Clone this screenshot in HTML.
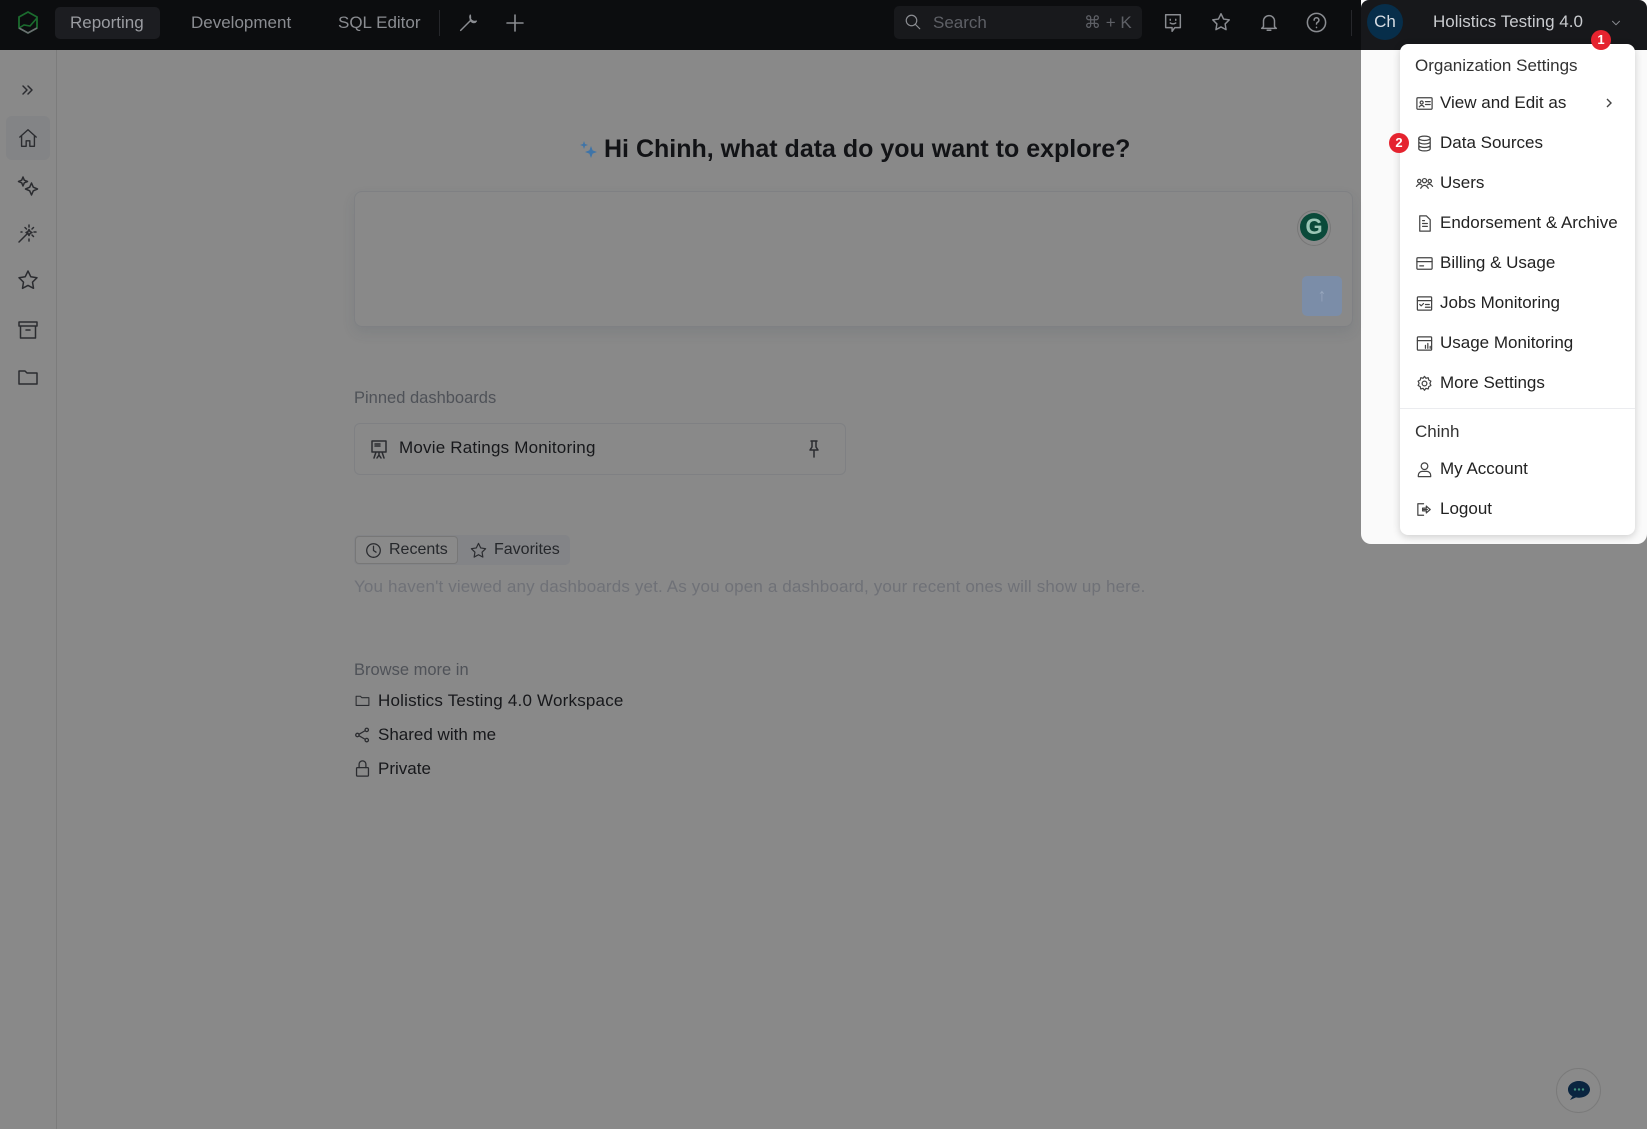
<!DOCTYPE html>
<html><head><meta charset="utf-8"><style>
*{box-sizing:border-box;margin:0;padding:0}
body{width:1647px;height:1129px;overflow:hidden;background:#898989;font-family:"Liberation Sans",sans-serif;position:relative;color:#141518}
.abs{position:absolute}
.top{left:0;top:0;width:1647px;height:50px;background:#0c0d0f}
.nav{color:#8a8c91;font-size:17px;top:13px}
.sb{left:0;top:50px;width:57px;height:1079px;border-right:1px solid #7c7c7c}
.ic{stroke:#2b2c30;fill:none;stroke-width:1.5;stroke-linecap:round;stroke-linejoin:round}
.ti{stroke:#8a8c91;fill:none;stroke-width:1.6;stroke-linecap:round;stroke-linejoin:round}
.mi{position:absolute;left:1415px;font-size:17px;color:#222;display:flex;align-items:center;height:24px}
.mi svg{width:19px;height:19px;margin-right:6px;flex:none}
.mi svg *{stroke:#444;fill:none;stroke-width:1.3;stroke-linecap:round;stroke-linejoin:round}
.badge{width:20px;height:20px;border-radius:50%;background:#e5232f;color:#fff;font-size:13px;font-weight:bold;text-align:center;line-height:20px}
</style></head><body>
<div class="abs top"></div>
<svg class="abs" style="left:16px;top:10px" width="24" height="26" viewBox="0 0 24 26"><path d="M12 2 L21 7 L21 18 L12 23 L3 18 L3 7 Z" fill="none" stroke="#1b6b2e" stroke-width="1.8"/><path d="M3 18 L8 15 L14 16 L21 8" fill="none" stroke="#1b6b2e" stroke-width="1.6"/><path d="M3 18 L12 23 L21 18" fill="none" stroke="#6c6e72" stroke-width="1.6"/></svg>
<div class="abs" style="left:55px;top:7px;width:105px;height:32px;background:#1c1d21;border-radius:5px"></div>
<div class="abs nav" style="left:70px;color:#9a9ca1">Reporting</div>
<div class="abs nav" style="left:191px">Development</div>
<div class="abs nav" style="left:338px">SQL Editor</div>
<div class="abs" style="left:439px;top:10px;width:1px;height:26px;background:#26272b"></div>
<svg class="abs" style="left:457px;top:12px" width="22" height="22" viewBox="0 0 24 24"><path class="ti" d="M14.7 6.3a4 4 0 0 0 5 5L21 10a5 5 0 0 1-6.5-6.5zM14.5 9.5 4 20" stroke-width="2.4"/></svg>
<svg class="abs" style="left:503px;top:11px" width="24" height="24" viewBox="0 0 24 24"><path class="ti" d="M12 4v16M4 12h16" stroke-width="2"/></svg>
<div class="abs" style="left:894px;top:6px;width:248px;height:33px;background:#18191c;border-radius:5px"></div>
<svg class="abs" style="left:904px;top:13px" width="18" height="18" viewBox="0 0 24 24"><circle class="ti" cx="10" cy="10" r="7"/><path class="ti" d="M15 15l6 6"/></svg>
<div class="abs nav" style="left:933px;color:#5e6066">Search</div>
<div class="abs nav" style="left:1084px;color:#5e6066">⌘ + K</div>
<svg class="abs" style="left:1162px;top:11px" width="22" height="24" viewBox="0 0 24 24"><path class="ti" d="M4 3h16v14h-6l-3 4v-4H4z"/><path class="ti" d="M9 8v1M15 8v1M9 12q3 2 6 0"/></svg>
<svg class="abs" style="left:1210px;top:11px" width="22" height="22" viewBox="0 0 24 24"><path class="ti" d="M12 3l2.8 5.8 6.2.9-4.5 4.4 1 6.2L12 17.4 6.5 20.3l1-6.2L3 9.7l6.2-.9z"/></svg>
<svg class="abs" style="left:1258px;top:11px" width="22" height="22" viewBox="0 0 24 24"><path class="ti" d="M6 17V11a6 6 0 0 1 12 0v6l2 2H4zM10 21h4"/></svg>
<svg class="abs" style="left:1305px;top:11px" width="23" height="23" viewBox="0 0 24 24"><circle class="ti" cx="12" cy="12" r="9.5"/><path class="ti" d="M9.5 9.5a2.5 2.5 0 1 1 3.5 2.3c-.7.4-1 .9-1 1.7M12 17v.2"/></svg>
<div class="abs" style="left:1351px;top:10px;width:1px;height:26px;background:#26272b"></div>
<div class="abs" style="left:1361px;top:0;width:286px;height:544px;background:#fafafa;border-radius:0 0 10px 10px"></div>
<div class="abs" style="left:1361px;top:0;width:286px;height:50px;background:#17181b;border-radius:8px 8px 0 0"></div>
<div class="abs" style="left:1367px;top:4px;width:36px;height:36px;border-radius:50%;background:#072e4a;color:#d8dde3;font-size:17px;text-align:center;line-height:36px">Ch</div>
<div class="abs" style="left:1433px;top:12px;font-size:17px;color:#c9cbcf">Holistics Testing 4.0</div>
<svg class="abs" style="left:1609px;top:16px" width="14" height="14" viewBox="0 0 24 24"><path class="ti" d="M6 9l6 6 6-6" stroke-width="2"/></svg>
<div class="abs" style="left:1400px;top:44px;width:235px;height:491px;background:#fff;border-radius:8px;box-shadow:0 2px 8px rgba(0,0,0,.18)"></div>
<div class="abs badge" style="left:1591px;top:30px">1</div>
<div class="abs" style="left:1415px;top:56px;font-size:17px;color:#333">Organization Settings</div>
<div class="mi" style="top:91px"><svg viewBox="0 0 20 20"><rect x="2" y="4" width="16" height="12" rx="1"/><circle cx="7" cy="9" r="1.6"/><path d="M4.5 13.5q2.5-3 5 0M11 8h5M11 11h5"/></svg>View and Edit as</div>
<svg class="abs" style="left:1603px;top:96px" width="12" height="14" viewBox="0 0 12 14"><path d="M4 3l4 4-4 4" stroke="#444" fill="none" stroke-width="1.4"/></svg>
<div class="abs badge" style="left:1389px;top:133px">2</div>
<div class="mi" style="top:131px"><svg viewBox="0 0 20 20"><ellipse cx="10" cy="4.5" rx="6" ry="2.3"/><path d="M4 4.5v11c0 1.3 2.7 2.3 6 2.3s6-1 6-2.3v-11M4 8.2c0 1.3 2.7 2.3 6 2.3s6-1 6-2.3M4 11.9c0 1.3 2.7 2.3 6 2.3s6-1 6-2.3"/></svg>Data Sources</div>
<div class="mi" style="top:171px"><svg viewBox="0 0 20 20"><circle cx="10" cy="7" r="2.2"/><circle cx="4.5" cy="7.5" r="1.8"/><circle cx="15.5" cy="7.5" r="1.8"/><path d="M6 15q4-6 8 0M1.5 13q3-4 5.5-1.5M18.5 13q-3-4-5.5-1.5"/></svg>Users</div>
<div class="mi" style="top:211px"><svg viewBox="0 0 20 20"><path d="M5 2h7l4 4v12H5zM8 10h5M8 13h5M8 7h2"/></svg>Endorsement &amp; Archive</div>
<div class="mi" style="top:251px"><svg viewBox="0 0 20 20"><rect x="2" y="4" width="16" height="12" rx="1"/><path d="M2 8h16M5 12.5h4"/></svg>Billing &amp; Usage</div>
<div class="mi" style="top:291px"><svg viewBox="0 0 20 20"><rect x="2.5" y="3" width="15" height="14" rx="1"/><path d="M2.5 7h15M5 11l1.5 1.5L9 10M11 11h4M11 14h5"/></svg>Jobs Monitoring</div>
<div class="mi" style="top:331px"><svg viewBox="0 0 20 20"><rect x="2.5" y="3" width="15" height="14" rx="1"/><path d="M2.5 7h15M11 15v-3M13.5 15v-5M16 15v-2"/></svg>Usage Monitoring</div>
<div class="mi" style="top:371px"><svg viewBox="0 0 20 20"><circle cx="10" cy="10" r="2.5"/><path d="M10 2.5l1.5 2 2.4-.6.6 2.4 2.2 1.2-1 2.3 1 2.3-2.2 1.2-.6 2.4-2.4-.6-1.5 2-1.5-2-2.4.6-.6-2.4-2.2-1.2 1-2.3-1-2.3 2.2-1.2.6-2.4 2.4.6z"/></svg>More Settings</div>
<div class="abs" style="left:1400px;top:408px;width:235px;height:1px;background:#ebecef"></div>
<div class="abs" style="left:1415px;top:422px;font-size:17px;color:#333">Chinh</div>
<div class="mi" style="top:457px"><svg viewBox="0 0 20 20"><circle cx="10" cy="6.5" r="3.5"/><path d="M3.5 17.5v-1.5a4 4 0 0 1 4-4h5a4 4 0 0 1 4 4v1.5z"/></svg>My Account</div>
<div class="mi" style="top:497px"><svg viewBox="0 0 20 20"><path d="M9 4H3v12h6M8 10h5M12 6.5l4 3.5-4 3.5"/><path d="M12 6.5V8.5H8v3h4v2"/></svg>Logout</div>

<div class="abs sb"></div>
<div class="abs" style="left:6px;top:116px;width:44px;height:44px;background:#838486;border-radius:6px"></div>
<svg class="abs" style="left:18px;top:80px" width="20" height="20" viewBox="0 0 20 20"><path class="ic" d="M5 6l4 4-4 4M10 6l4 4-4 4"/></svg>
<svg class="abs" style="left:17px;top:127px" width="22" height="22" viewBox="0 0 24 24"><path class="ic" d="M3 11l9-8 9 8M5 9.5V21h5v-6h4v6h5V9.5"/></svg>
<svg class="abs" style="left:16px;top:174px" width="24" height="24" viewBox="0 0 24 24"><path class="ic" d="M7 3l1.3 3.2L11.5 7.5 8.3 8.8 7 12 5.7 8.8 2.5 7.5 5.7 6.2zM15.5 9l1.8 4.2 4.2 1.8-4.2 1.8-1.8 4.2-1.8-4.2-4.2-1.8 4.2-1.8z"/></svg>
<svg class="abs" style="left:16px;top:221px" width="24" height="24" viewBox="0 0 24 24"><path class="ic" d="M3 21l9-9M13 4v2M13 18v2M20 11h-2M6 11H5M17.5 6.5l-1.5 1.5M17.5 15.5L16 14M9 6.5l1.5 1.5M13 8.5l1 2 2 1-2 1-1 2-1-2-2-1 2-1z"/></svg>
<svg class="abs" style="left:16px;top:268px" width="24" height="24" viewBox="0 0 24 24"><path class="ic" d="M12 3l2.8 5.8 6.2.9-4.5 4.4 1 6.2L12 17.4 6.5 20.3l1-6.2L3 9.7l6.2-.9z"/></svg>
<svg class="abs" style="left:16px;top:318px" width="24" height="24" viewBox="0 0 24 24"><path class="ic" d="M3 4h18v4H3zM4.5 8v12h15V8M10 12h4"/></svg>
<svg class="abs" style="left:16px;top:365px" width="24" height="24" viewBox="0 0 24 24"><path class="ic" d="M3 6h6l2 2h10v11H3z"/></svg>

<svg class="abs" style="left:579px;top:139px" width="20" height="22" viewBox="0 0 20 22"><path d="M5 2l1 3 3 1-3 1-1 3-1-3-3-1 3-1zM12 7l1.6 4.4L18 13l-4.4 1.6L12 19l-1.6-4.4L6 13l4.4-1.6z" fill="#3e74a8"/></svg>
<div class="abs" style="left:604px;top:135px;font-size:25px;font-weight:600;color:#121316">Hi Chinh, what data do you want to explore?</div>
<div class="abs" style="left:354px;top:191px;width:999px;height:136px;border:1px solid #7f8083;border-radius:8px;box-shadow:0 6px 12px rgba(60,70,90,.12)"></div>
<div class="abs" style="left:1297px;top:210px;width:34px;height:36px;border-radius:50%;background:#8a8a8a;border:1px solid #777"></div>
<div class="abs" style="left:1300px;top:213px;width:28px;height:28px;border-radius:50%;background:#0a4a3a;color:#9ac6b6;font-weight:bold;font-size:22px;text-align:center;line-height:28px">G</div>
<div class="abs" style="left:1302px;top:276px;width:40px;height:40px;border-radius:5px;background:#7b8da8;color:#97a6bd;text-align:center;line-height:38px;font-size:18px">↑</div>
<div class="abs" style="left:354px;top:389px;font-size:16.5px;color:#4f5258">Pinned dashboards</div>
<div class="abs" style="left:354px;top:423px;width:492px;height:52px;border:1px solid #7f8083;border-radius:6px"></div>
<svg class="abs" style="left:369px;top:438px" width="20" height="22" viewBox="0 0 20 22"><path class="ic" stroke-width="1.3" d="M3 3h14v11H3zM6 6h5M6 8h5M10 14v3M8 20l2-3 2 3M5 20l2-6M15 20l-2-6"/></svg>
<div class="abs" style="left:399px;top:438px;font-size:17px;font-weight:500;color:#17181b;letter-spacing:0.2px">Movie Ratings Monitoring</div>
<svg class="abs" style="left:806px;top:439px" width="16" height="20" viewBox="0 0 16 20"><path class="ic" stroke-width="1.3" d="M5 2h6M6 2v6l-2 3h8l-2-3V2M8 11v7"/></svg>
<div class="abs" style="left:354px;top:535px;width:216px;height:30px;background:#838487;border-radius:5px"></div>
<div class="abs" style="left:355px;top:536px;width:103px;height:28px;border:1px solid #777;border-radius:4px;background:#8a8a8a"></div>
<svg class="abs" style="left:365px;top:542px" width="17" height="17" viewBox="0 0 20 20"><circle class="ic" stroke-width="1.4" cx="10" cy="10" r="8"/><path class="ic" stroke-width="1.4" d="M10 5v5l3 2"/></svg>
<div class="abs" style="left:389px;top:541px;font-size:16px;color:#25272b">Recents</div>
<svg class="abs" style="left:469px;top:541px" width="19" height="19" viewBox="0 0 24 24"><path class="ic" d="M12 3l2.8 5.8 6.2.9-4.5 4.4 1 6.2L12 17.4 6.5 20.3l1-6.2L3 9.7l6.2-.9z"/></svg>
<div class="abs" style="left:494px;top:541px;font-size:16px;color:#25272b">Favorites</div>
<div class="abs" style="left:354px;top:577px;font-size:17px;color:#6f7177;letter-spacing:0.15px">You haven't viewed any dashboards yet. As you open a dashboard, your recent ones will show up here.</div>
<div class="abs" style="left:354px;top:661px;font-size:16.5px;color:#4f5258">Browse more in</div>
<svg class="abs" style="left:354px;top:692px" width="17" height="17" viewBox="0 0 24 24"><path class="ic" stroke="#555" d="M3 6h6l2 2h10v11H3z"/></svg>
<div class="abs" style="left:378px;top:691px;font-size:17px;color:#17181b;letter-spacing:0.2px">Holistics Testing 4.0 Workspace</div>
<svg class="abs" style="left:354px;top:726px" width="17" height="18" viewBox="0 0 20 20"><g class="ic" stroke="#555" stroke-width="1.2"><circle cx="4" cy="10" r="2"/><circle cx="15" cy="4" r="2"/><circle cx="15" cy="16" r="2"/><path d="M6 9l7-4M6 11l7 4"/></g></svg>
<div class="abs" style="left:378px;top:725px;font-size:17px;color:#17181b">Shared with me</div>
<svg class="abs" style="left:354px;top:759px" width="17" height="19" viewBox="0 0 20 22"><g class="ic" stroke="#555" stroke-width="1.3"><rect x="3" y="10" width="14" height="10" rx="1"/><path d="M6 10V6a4 4 0 0 1 8 0v4"/></g></svg>
<div class="abs" style="left:378px;top:759px;font-size:17px;color:#17181b">Private</div>
<div class="abs" style="left:1556px;top:1068px;width:45px;height:45px;border-radius:50%;border:1px solid #7a7a7a;background:#8a8a8a"></div>
<svg class="abs" style="left:1566px;top:1079px" width="26" height="24" viewBox="0 0 26 24"><path d="M13 2C6.5 2 2 6 2 10.5c0 3 1.8 5.4 4.5 6.8L4 21l6-2.6c1 .2 2 .3 3 .3 6.5 0 11-4 11-8.2S19.5 2 13 2z" fill="#0a2540"/><circle cx="9" cy="10.5" r="1.2" fill="#3f8f7a"/><circle cx="13" cy="10.5" r="1.2" fill="#3f8f7a"/><circle cx="17" cy="10.5" r="1.2" fill="#3f8f7a"/></svg>
</body></html>
